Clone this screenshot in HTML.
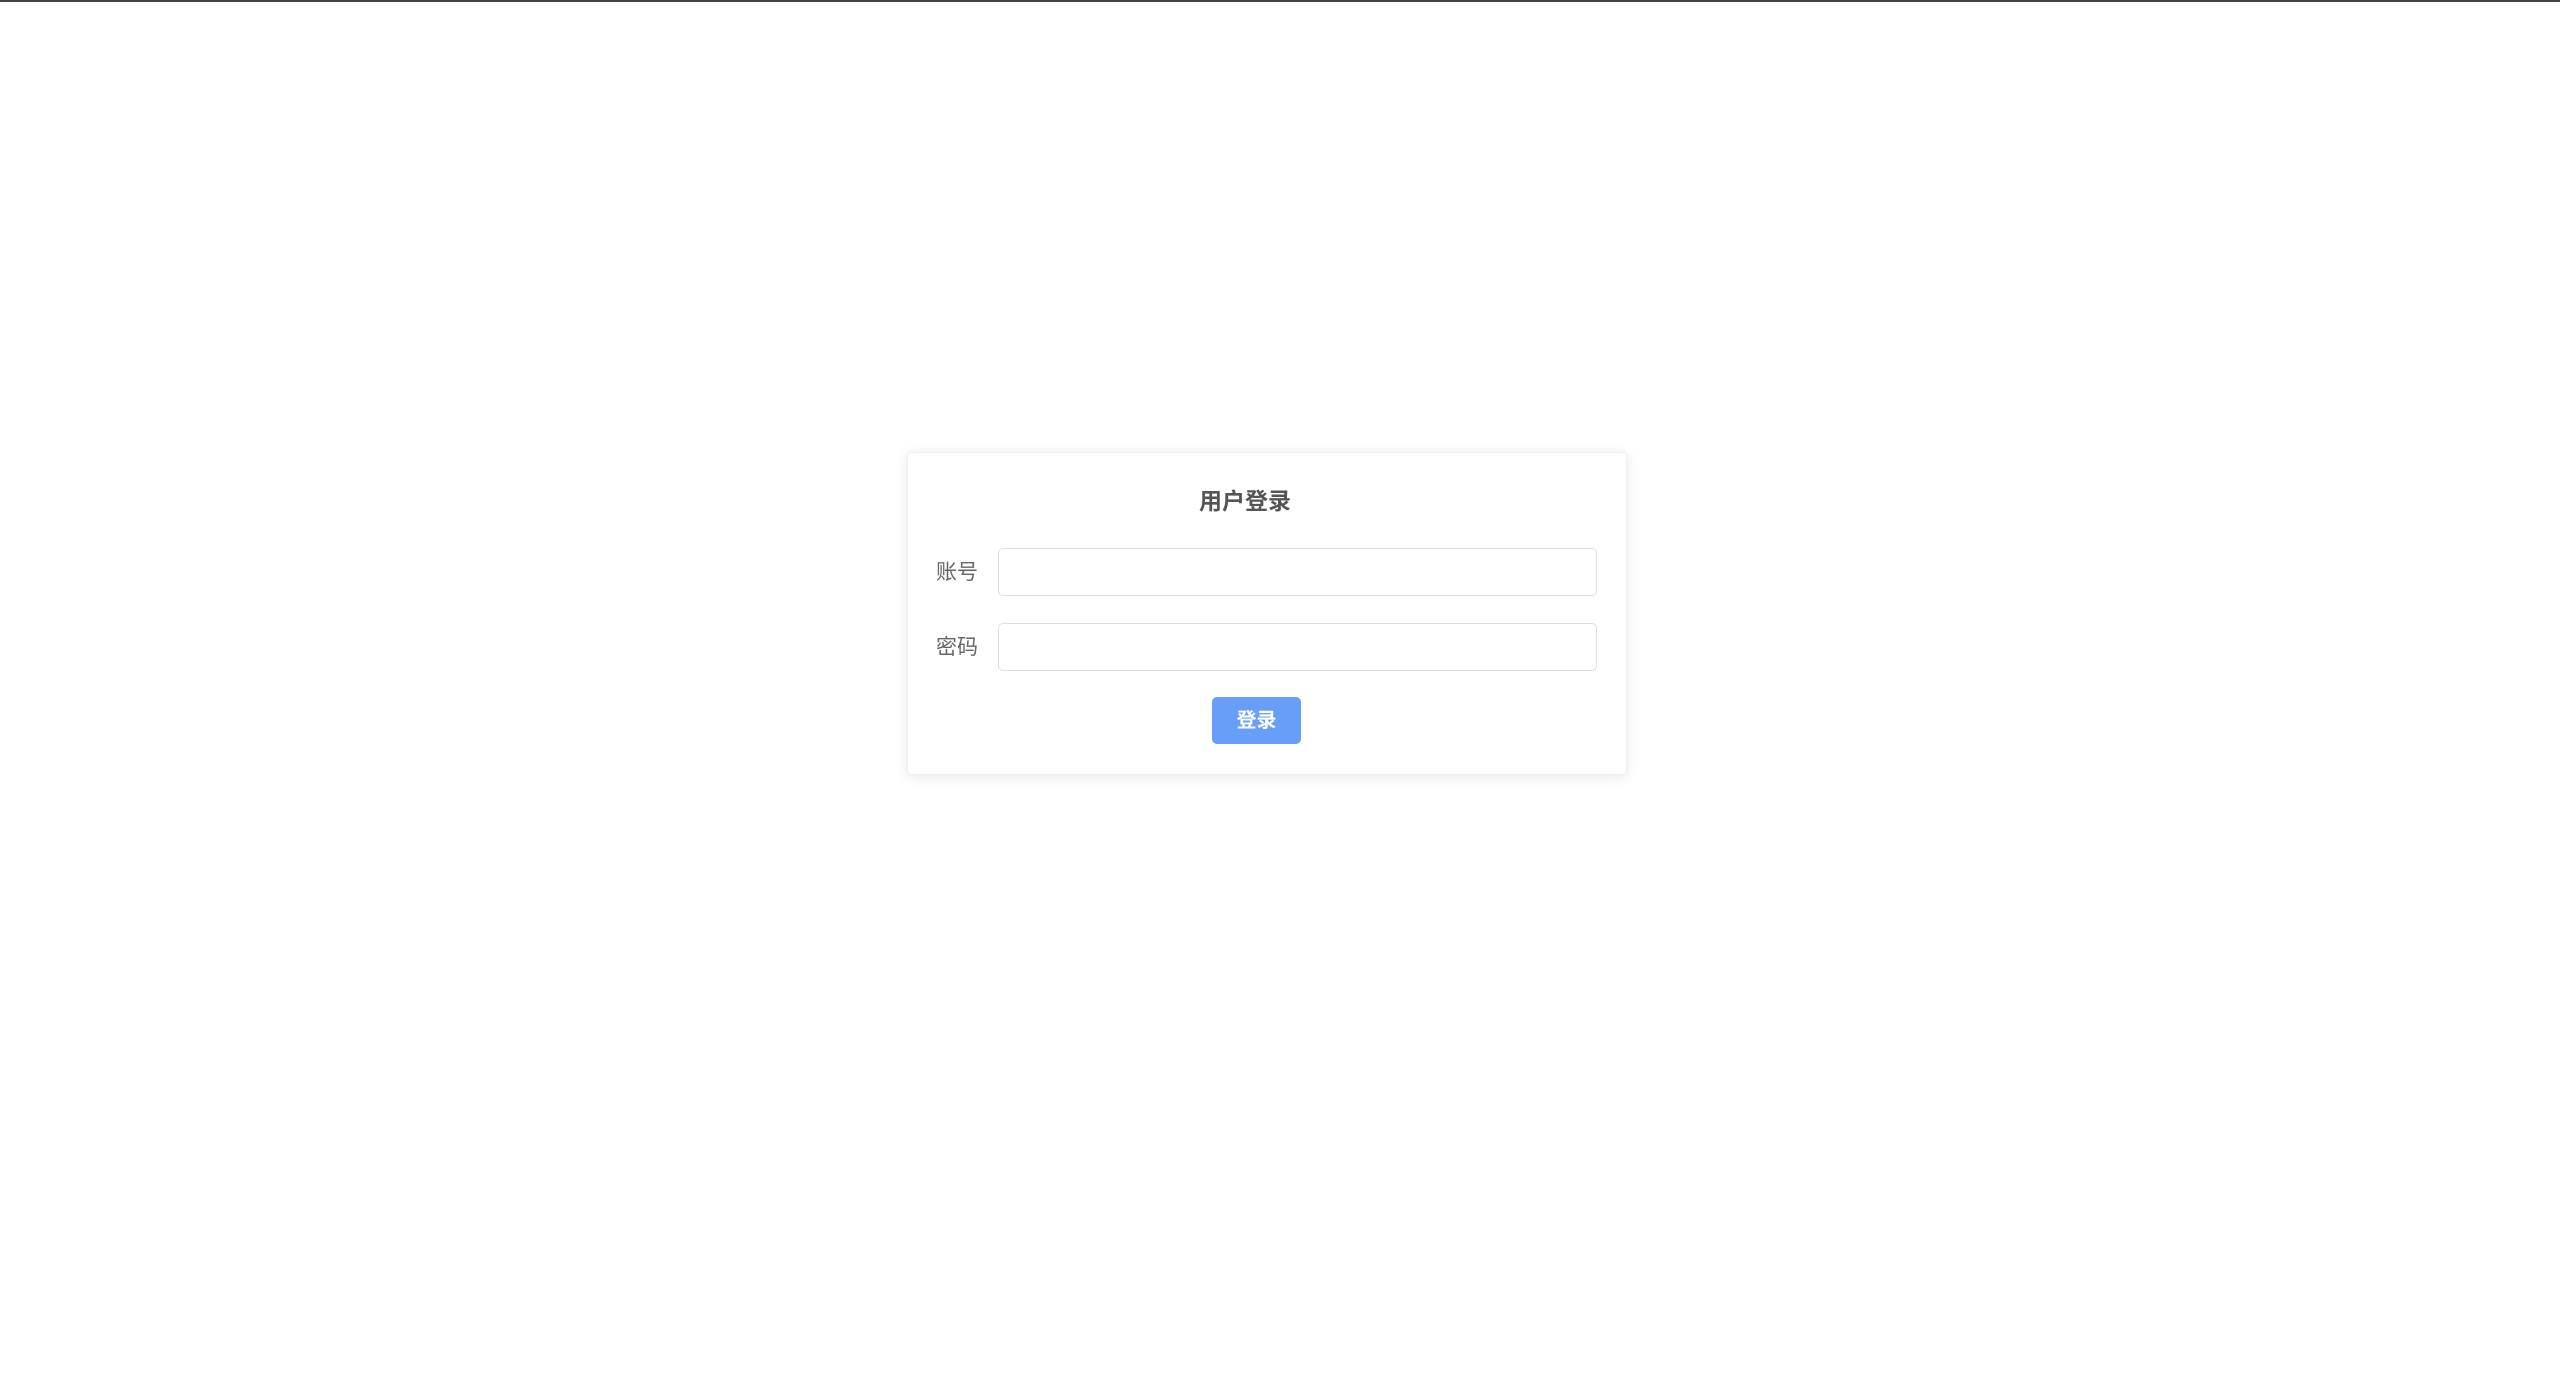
<!DOCTYPE html>
<html><head><meta charset="utf-8"><style>
html,body{margin:0;padding:0;background:#fff;width:2560px;height:1398px;overflow:hidden;font-family:"Liberation Sans","Noto Sans CJK SC",sans-serif;}
.top{position:absolute;left:0;top:0;width:2560px;height:2px;background:#444;}
.card{position:absolute;left:907px;top:452px;width:720px;height:323px;box-sizing:border-box;border:1px solid #ebeef5;border-radius:4px;background:#fff;box-shadow:0 2px 12px rgba(0,0,0,0.1);}
.t{position:absolute;top:486px;left:1195px;width:100px;text-align:center;font-size:23px;font-weight:bold;color:#555;line-height:30px;}
.lab{position:absolute;left:936px;font-size:21px;color:#666;line-height:30px;}
.inp{position:absolute;left:998px;width:599px;height:48px;box-sizing:border-box;border:1px solid #dcdfe6;border-radius:5px;background:#fff;}
.btn{position:absolute;left:1212px;top:697px;width:89px;height:47px;background:#669ef8;border-radius:5px;color:#fff;font-size:20px;font-weight:bold;text-align:center;line-height:49px;}
</style></head><body>
<div class="top"></div>
<div class="card"></div>
<div class="t">用户登录</div>
<div class="lab" style="top:558px">账号</div>
<div class="inp" style="top:548px"></div>
<div class="lab" style="top:633px">密码</div>
<div class="inp" style="top:623px"></div>
<div class="btn">登录</div>
</body></html>
